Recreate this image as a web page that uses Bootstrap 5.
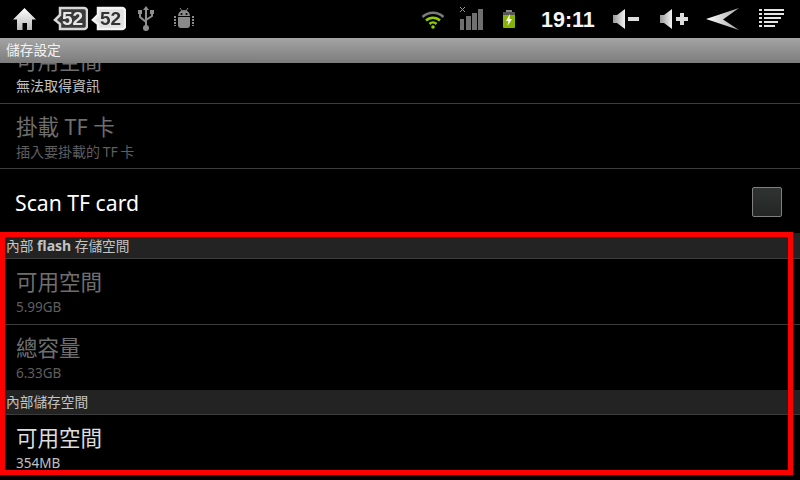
<!DOCTYPE html>
<html lang="zh-Hant">
<head>
    <meta charset="UTF-8">
    <meta name="viewport" content="width=device-width, initial-scale=1.0">
    <title>儲存設定</title>
    <link href="https://cdn.jsdelivr.net/npm/bootstrap@5.3.3/dist/css/bootstrap.min.css" rel="stylesheet">
    <script src="https://cdn.jsdelivr.net/npm/bootstrap@5.3.3/dist/js/bootstrap.bundle.min.js"></script>
    <style>
        html, body { width: 800px; height: 480px; overflow: hidden; background: #000; }
        body { font-family: "Noto Sans", "Noto Sans CJK TC", sans-serif; color: #fff; position: relative; }
        .status-bar { height: 38px; background: #000; }
        .status-bar svg { display: block; flex: none; }
        .clock { font-family: "Liberation Sans", sans-serif; font-weight: 700; font-size: 21.5px; line-height: 38px; width: 52px; margin-left: 25px; margin-top: 1px; color: #f4f4f4; }
        .i-home { margin-left: 12px; }
        .i-b1 { margin-left: 15px; filter: blur(.6px); }
        .i-b2 { margin-left: 2px; filter: blur(.6px); }
        .i-usb { margin-left: 11px; }
        .i-droid { margin-left: 18px; }
        .i-wifi { margin-left: 226px; }
        .i-sig { margin-left: 15px; }
        .i-bat { margin-left: 19px; }
        .i-vm { margin-left: 20px; }
        .i-vp { margin-left: 20px; }
        .i-back { margin-left: 18px; }
        .i-menu { margin-left: 19px; }
        .title-bar { height: 25px; background: linear-gradient(#a4a4a4, #7c7c7c); font-size: 13.7px; line-height: 24px; padding-left: 6px; color: #f2f2f2; position: relative; z-index: 1; }
        .pref-viewport { height: 417px; overflow: hidden; }
        .pref-list { margin-top: -25px; }
        .pref-row { height: 66px; border-bottom: 1px solid #3c3c3c; padding: 8px 16px 0; }
        .pref-row.short-row { height: 65px; }
        .pref-row.last-row { border-bottom: 0; height: 65px; }
        .pref-title { font-size: 21.5px; line-height: 30px; }
        .pref-sub { font-size: 14px; line-height: 18px; margin-top: 1px; color: #c0c0c0; }
        .pref-sub.num-sub { font-size: 13.5px; }
        .pref-sub.tf-sub { word-spacing: -1px; }
        .is-off .pref-title { color: #6e6e6e; }
        .is-off .pref-sub { color: #5e5e5e; }
        .dim-title { color: #6e6e6e; }
        .soft-title { color: #dcdcdc; }
        .scan-row { height: 64px; padding: 4px 18px 0 15px; }
        .scan-label { font-size: 21.2px; line-height: 30px; }
        .fake-check { width: 30px; height: 30px; border: 1px solid #808080; border-radius: 2px; background: linear-gradient(#2f3331, #232624); margin-top: -2px; }
        .sec-head { height: 25px; background: #232323; border-bottom: 1px solid #3c3c3c; font-size: 13.7px; line-height: 24px; padding-left: 6px; color: #c4c4c4; }
        .sec-head.first-head { height: 26px; line-height: 25px; }
        .sec-head b { font-weight: 700; font-size: 14px; }
        .red-frame { position: absolute; left: 0; top: 232px; width: 793px; height: 243px; border: 5px solid #f00; pointer-events: none; }
    </style>
</head>
<body>
    <div class="status-bar d-flex align-items-start">
        <svg class="i-home" width="25" height="38" viewBox="0 0 25 38"><defs><linearGradient id="gh" x1="0" y1="0" x2="0" y2="1"><stop offset="0" stop-color="#fff"/><stop offset="1" stop-color="#b8b8b8"/></linearGradient></defs><path fill="url(#gh)" d="M12.5 8 1 19.500h4V30h5.500v-7h4.500v7H20V19.500h4z"/></svg>
        <svg class="i-b1" width="36" height="38" viewBox="0 0 36 38"><path fill="#3a3a3a" stroke="#d8d8d8" stroke-width="2.500" d="M8 8h24a3 3 0 0 1 3 3v15a3 3 0 0 1-3 3H8v-5l-5-4 5-5z"/><text x="20.500" y="25" text-anchor="middle" font-family="Liberation Sans" font-weight="700" font-size="19" fill="#e8e8e8">52</text></svg>
        <svg class="i-b2" width="36" height="38" viewBox="0 0 36 38"><path fill="#e2e2e2" stroke="#f4f4f4" stroke-width="2.500" d="M8 8h24a3 3 0 0 1 3 3v15a3 3 0 0 1-3 3H8v-5l-5-4 5-5z"/><text x="20.500" y="25" text-anchor="middle" font-family="Liberation Sans" font-weight="700" font-size="19" fill="#333">52</text></svg>
        <svg class="i-usb" width="18" height="38" viewBox="0 0 18 38" fill="none" stroke="#8e8e8e"><path stroke-width="2" d="M9 9v19M3 13v4l6 5M15 13v3l-6 4"/><path fill="#8e8e8e" stroke="none" d="M9 6l3 4H6zM1 10h4v4H1zM13 10h4v4h-4z"/><circle cx="9" cy="28" r="3" fill="#8e8e8e" stroke="none"/></svg>
        <svg class="i-droid" width="22" height="38" viewBox="0 0 22 38" fill="#8a8a8a"><path d="M5 16a6 6 0 0 1 12 0zM5 17h12v8a3 3 0 0 1-3 3H8a3 3 0 0 1-3-3z"/><path stroke="#8a8a8a" d="M7 8l2 3M15 8l-2 3"/><path stroke="#8a8a8a" stroke-width="2" stroke-dasharray="2 1" d="M2 16v10M20 16v10"/><circle cx="8.500" cy="14" r="1" fill="#000"/><circle cx="13.500" cy="14" r="1" fill="#000"/></svg>
        <svg class="i-wifi" width="24" height="38" viewBox="0 0 24 38" fill="none" stroke-width="2.500"><path stroke="#7a7a7a" d="M1.500 17a15 15 0 0 1 21 0"/><path stroke="#8fcf00" d="M5 20.500a10 10 0 0 1 14 0M8.500 24a5 5 0 0 1 7 0"/><circle cx="12" cy="27" r="1.800" fill="#8fcf00" stroke="none"/></svg>
        <svg class="i-sig" width="23" height="38" viewBox="0 0 23 38" fill="#6f6f6f"><path d="M0 19h4v11H0zM6 16h5v14H6zM12 13h5v17h-5zM18 9h5v21h-5z"/><path stroke="#9a9a9a" fill="none" d="M0 7l5 5M5 7l-5 5"/></svg>
        <svg class="i-bat" width="14" height="38" viewBox="0 0 14 38"><path fill="#8a8a8a" d="M4 10h6v2H4z"/><rect x="1" y="12" width="12" height="16" rx="1" fill="#86b400"/><rect x="1" y="12" width="12" height="3" fill="#555"/><path fill="#fff" d="M8 14 4 21h2.500L5.500 26 10 19H7.500z"/></svg>
        <div class="clock">19:11</div>
        <svg class="i-vm" width="27" height="38" viewBox="0 0 27 38"><defs><linearGradient id="gv" x1="0" y1="0" x2="1" y2="0"><stop offset="0" stop-color="#999"/><stop offset="1" stop-color="#f2f2f2"/></linearGradient></defs><path fill="url(#gv)" d="M0 15h4l8-6v20l-8-6H0z"/><path fill="#ddd" d="M15 17h11v4H15z"/></svg>
        <svg class="i-vp" width="28" height="38" viewBox="0 0 28 38"><path fill="url(#gv)" d="M0 15h4l8-6v20l-8-6H0z"/><path fill="#ddd" d="M16 17h4v-4h4v4h4v4h-4v4h-4v-4h-4z"/></svg>
        <svg class="i-back" width="34" height="38" viewBox="0 0 34 38"><defs><linearGradient id="gb" x1="0" y1="0" x2="1" y2="0"><stop offset="0" stop-color="#fff"/><stop offset="1" stop-color="#aaa"/></linearGradient></defs><path fill="url(#gb)" d="M0 19 33 8 17 19.500 33 30z"/></svg>
        <svg class="i-menu" width="25" height="38" viewBox="0 0 25 38" fill="#e4e4e4"><path d="M0 9h3v2H0zM5 9h20v2H5zM0 13h3v2H0zM5 13h20v2H5zM0 17h3v2H0zM5 17h17v2H5zM0 21h3v2H0zM5 21h14v2H5zM0 25h3v2H0zM5 25h11v2H5z"/></svg>
    </div>
    <div class="title-bar">儲存設定</div>
    <div class="pref-viewport">
        <div class="pref-list">
            <div class="pref-row">
                <div class="pref-title dim-title">可用空間</div>
                <div class="pref-sub">無法取得資訊</div>
            </div>
            <div class="pref-row short-row is-off">
                <div class="pref-title">掛載 TF 卡</div>
                <div class="pref-sub tf-sub">插入要掛載的 TF 卡</div>
            </div>
            <div class="scan-row d-flex justify-content-between align-items-center">
                <span class="scan-label">Scan TF card</span>
                <span class="fake-check"></span>
            </div>
            <div class="sec-head first-head">內部 <b>flash</b> 存儲空間</div>
            <div class="pref-row is-off">
                <div class="pref-title">可用空間</div>
                <div class="pref-sub num-sub">5.99GB</div>
            </div>
            <div class="pref-row is-off last-row">
                <div class="pref-title">總容量</div>
                <div class="pref-sub num-sub">6.33GB</div>
            </div>
            <div class="sec-head">內部儲存空間</div>
            <div class="pref-row last-row">
                <div class="pref-title soft-title">可用空間</div>
                <div class="pref-sub num-sub">354MB</div>
            </div>
        </div>
    </div>
    <div class="red-frame"></div>
</body>
</html>
